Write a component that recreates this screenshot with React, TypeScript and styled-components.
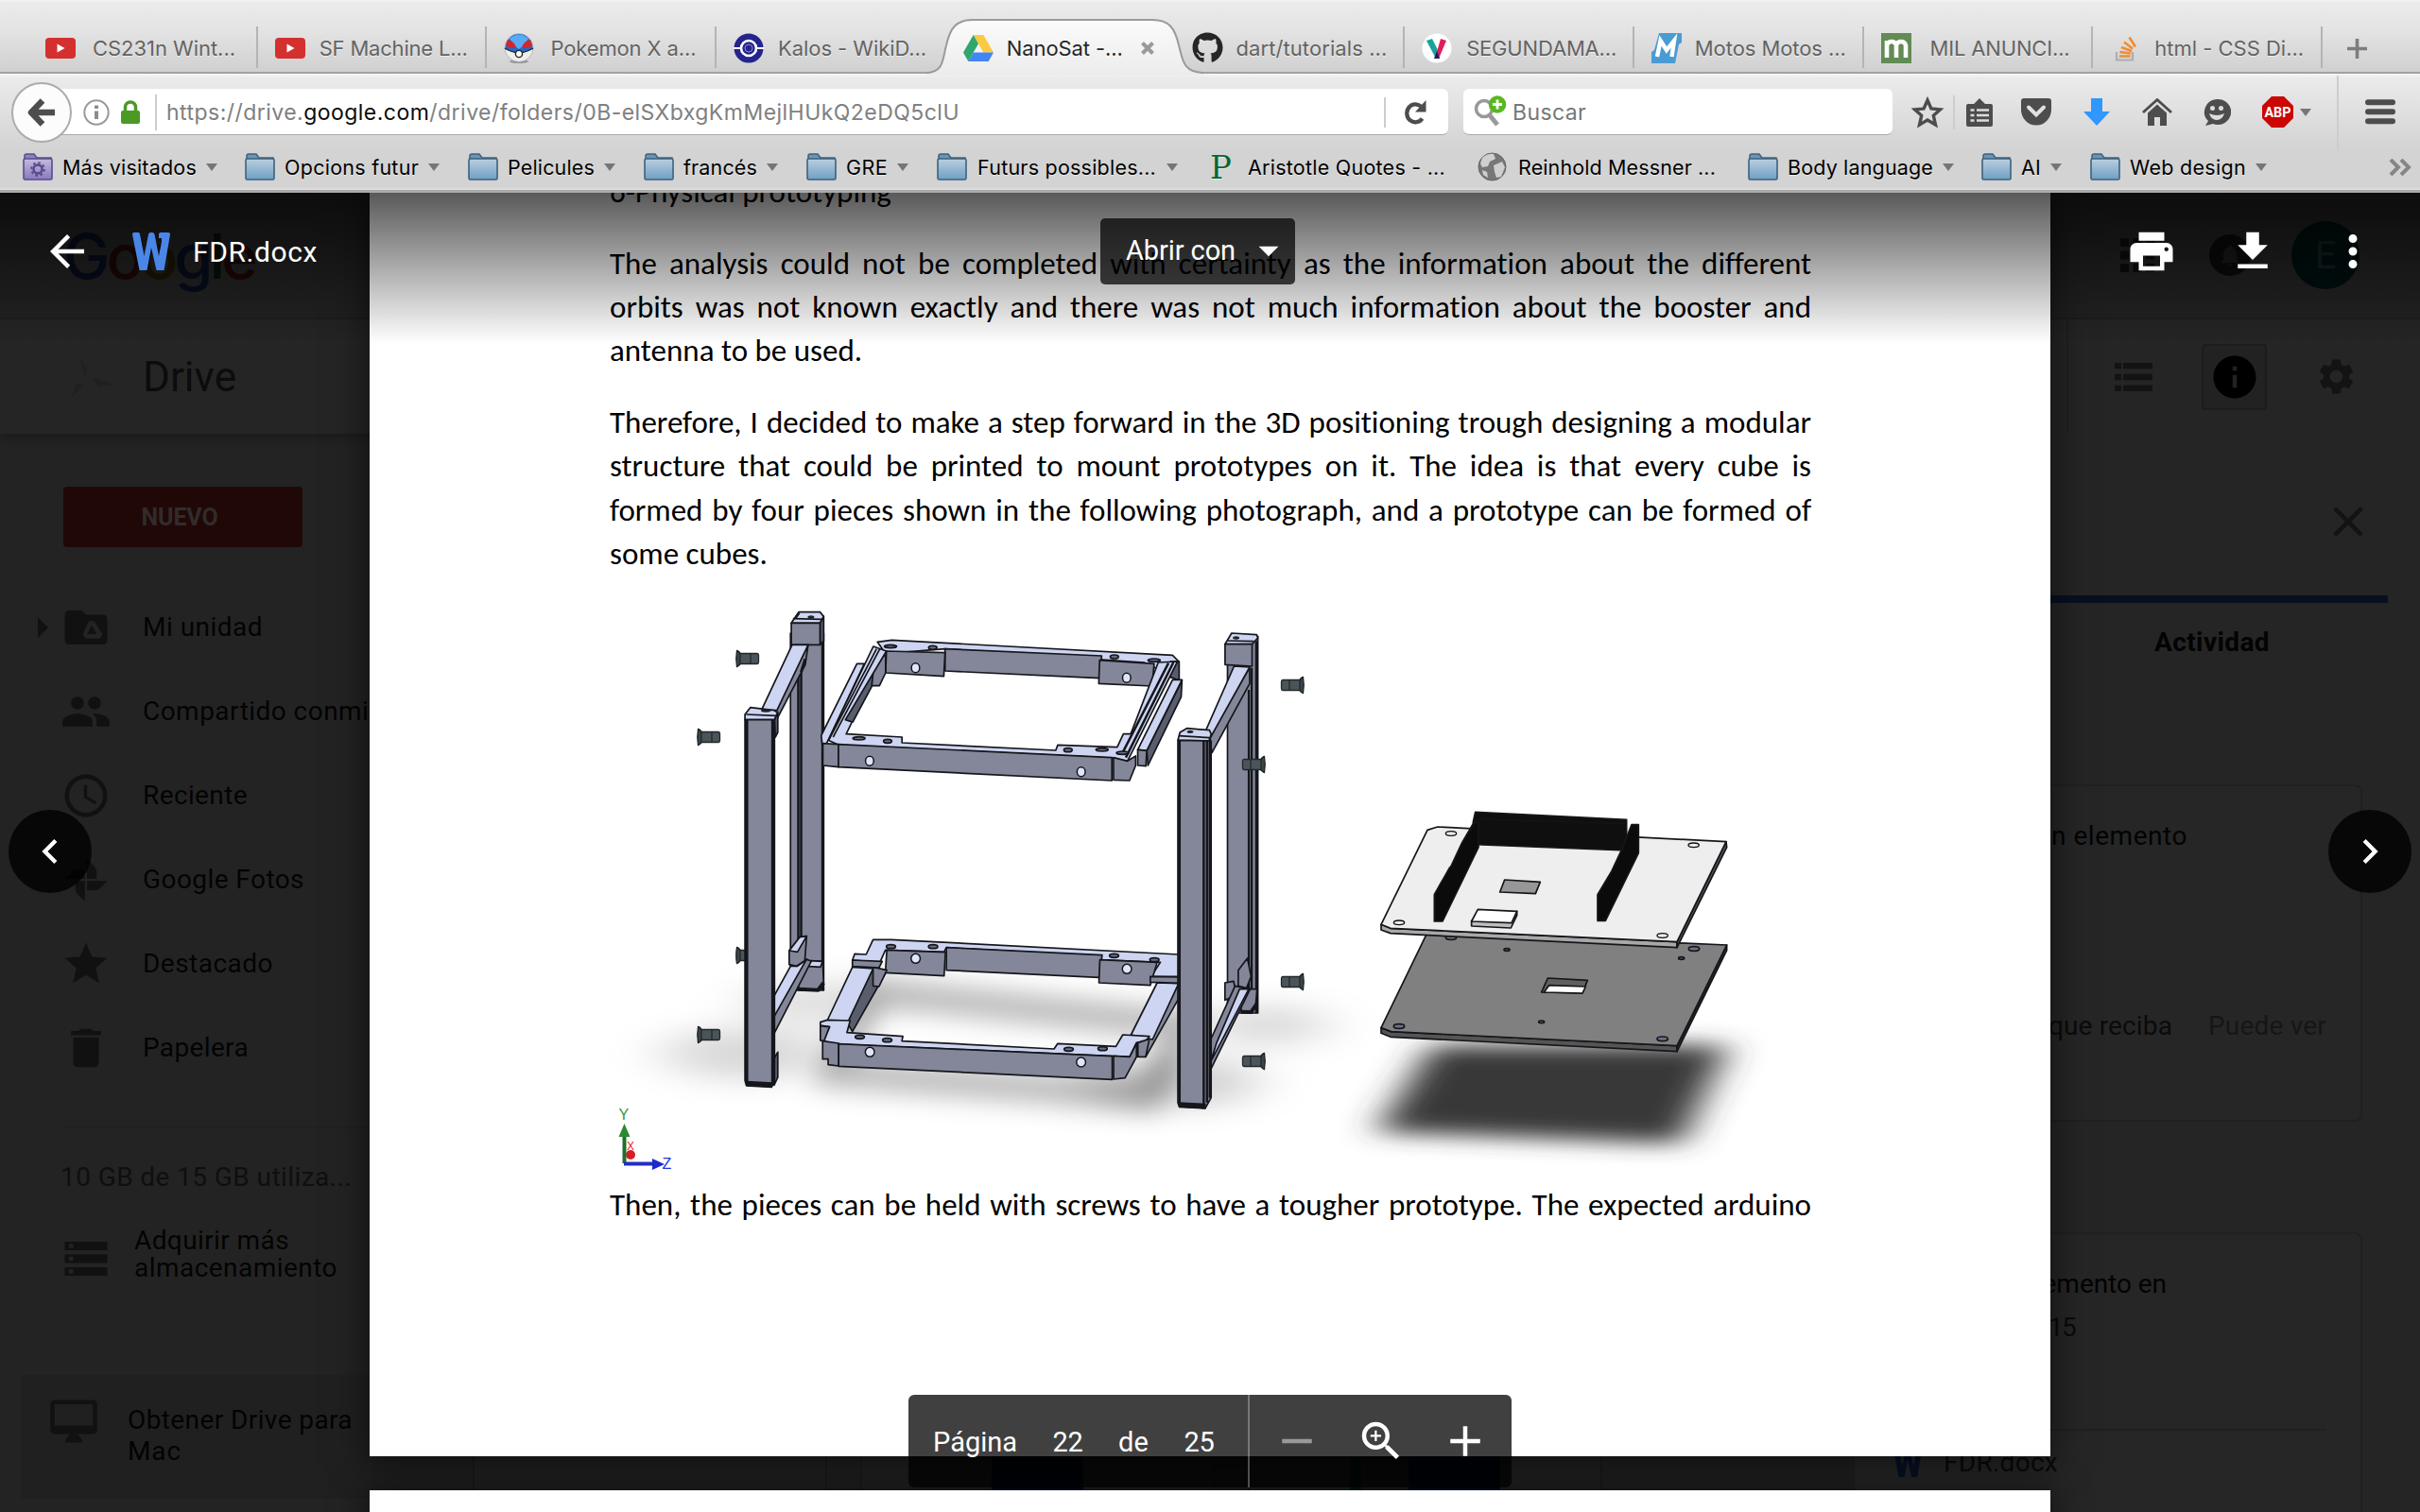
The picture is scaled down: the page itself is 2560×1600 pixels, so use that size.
import React, { useLayoutEffect, useRef, useState } from 'react';
import styled, { createGlobalStyle } from 'styled-components';
import {
  MdAccessTime, MdAdd, MdApps, MdArrowBack, MdArrowDropDown, MdChevronLeft, MdChevronRight,
  MdClose, MdDelete, MdFileDownload, MdInfo, MdMoreVert, MdNotifications,
  MdPeople, MdPrint, MdRemove, MdSettings, MdStar, MdStorage, MdZoomIn,
} from 'react-icons/md';
import { FaGithub } from 'react-icons/fa';

const Global = createGlobalStyle`
  * { box-sizing: border-box; }
  html, body { margin: 0; padding: 0; background: #232323; }
  body { width: 2560px; height: 1600px; overflow: hidden; }
  svg { display: block; flex: none; }
  p, h2 { margin: 0; font-weight: 400; }
`;

const ui = `Inter, Roboto, sans-serif`;
const roboto = `Roboto, "Liberation Sans", sans-serif`;

/* ---------- text tracked out to a given width ---------- */

const Tracked = styled.span`
  display: inline-block;
  flex: none;
  white-space: pre;
`;

function Fit({ w, children }: { w: number; children: React.ReactNode }) {
  const ref = useRef<HTMLSpanElement>(null);
  const [spacing, setSpacing] = useState(0);
  useLayoutEffect(() => {
    const el = ref.current;
    if (!el) return;
    const length = (el.textContent || '').length || 1;
    setSpacing((w - el.getBoundingClientRect().width) / length);
  }, [w]);
  return <Tracked ref={ref} style={{ letterSpacing: spacing }}>{children}</Tracked>;
}

/* ---------- browser chrome ---------- */

const Screen = styled.div`
  width: 2560px;
  height: 1600px;
  display: flex;
  flex-direction: column;
  overflow: hidden;
`;

const TabStrip = styled.div`
  height: 78px;
  flex: none;
  display: flex;
  padding-left: 30px;
  background: linear-gradient(#f4f4f4 0, #ebebeb 3px, #e4e4e4 40%, #d0d0d0 100%);
  border-bottom: 2px solid #a2a2a2;
  font-family: ${ui};
  font-size: 22px;
  color: #636363;
  text-shadow: 0 1px 0 rgba(255, 255, 255, 0.6);
`;

const TabItem = styled.div<{ $active?: boolean; $divider: boolean; $gap: number }>`
  position: relative;
  width: 242.7px;
  flex: none;
  height: 78px;
  display: flex;
  align-items: center;
  padding: 23px 0 0 18px;
  gap: ${(p) => p.$gap}px;
  color: ${(p) => (p.$active ? '#262626' : 'inherit')};
  background: ${(p) =>
    p.$divider ? 'linear-gradient(#b4b4b4, #b4b4b4) right 28px / 2px 44px no-repeat' : 'none'};
`;

const ActiveShape = styled.svg`
  position: absolute;
  left: -22px;
  top: 0;
`;

const TabFace = styled.span`
  position: relative;
  display: flex;
  width: 32px;
  justify-content: center;
`;

const TabTitle = styled.span`
  position: relative;
  display: flex;
  align-items: center;
  gap: 19px;
  padding-top: 1px;
`;

const NewTab = styled.div`
  padding: 41px 0 0 26px;
`;

const NavBar = styled.div`
  height: 80px;
  flex: none;
  display: flex;
  align-items: center;
  padding: 1px 0 0 12px;
  background: linear-gradient(#f6f6f6 0, #ebebeb 4px, #d3d3d3 100%);
`;

const BackButton = styled.div`
  width: 64px;
  height: 64px;
  border-radius: 50%;
  background: #fcfcfc;
  border: 2px solid #acacac;
  display: flex;
  align-items: center;
  justify-content: center;
  flex: none;
  z-index: 1;
`;

const Field = styled.div<{ $w: number; $pad: number }>`
  width: ${(p) => p.$w}px;
  height: 49px;
  flex: none;
  display: flex;
  align-items: center;
  padding-left: ${(p) => p.$pad}px;
  padding-top: 1px;
  background: #fff;
  border-radius: 6px;
  border-bottom: 1px solid #a8a8a8;
  font-family: ${ui};
  font-size: 23px;
  color: #808080;
`;

const UrlField = styled(Field)`
  margin-left: -30px;
  border-radius: 0 6px 6px 0;
`;

const SearchField = styled(Field)`
  margin-left: 16px;
  color: #777;
`;

const Host = styled.span`
  color: #0c0c0c;
`;

const Rule = styled.div<{ $h: number; $l: number; $r: number }>`
  width: 2px;
  height: ${(p) => p.$h}px;
  flex: none;
  margin: 0 ${(p) => p.$r}px 0 ${(p) => p.$l}px;
  background: #cdcdcd;
`;

const Slot = styled.div<{ $l: number }>`
  margin-left: ${(p) => p.$l}px;
  flex: none;
  display: flex;
  align-items: center;
`;

const Bookmarks = styled.div`
  height: 46px;
  flex: none;
  display: flex;
  padding: 0 0 6px 24px;
  background: #d3d3d3;
  border-bottom: 3px solid #a9a9a9;
  box-shadow: inset 0 -2px 0 #dcdcdc;
  font-family: ${ui};
  font-size: 21.5px;
  color: #000;
`;

const Bookmark = styled.div<{ $w: number; $gap: number }>`
  width: ${(p) => p.$w}px;
  flex: none;
  display: flex;
  align-items: center;
  gap: ${(p) => p.$gap}px;
  text-shadow: 0 1px 0 rgba(255, 255, 255, 0.5);
`;

const Caret = styled.span`
  border: 6.5px solid transparent;
  border-top: 8px solid #767676;
  border-bottom: 0;
`;

const YouTube = () => (
  <svg width="32" height="22" viewBox="0 0 32 22">
    <rect width="32" height="22" rx="4" fill="#d3302f" />
    <path d="M12.5 6.5v9l8-4.5z" fill="#fff" />
  </svg>
);

const PokeBall = () => (
  <svg width="32" height="32" viewBox="0 0 32 32">
    <ellipse cx="16" cy="30" rx="10" ry="2" fill="#999" />
    <circle cx="16" cy="15.5" r="15" fill="#eee" stroke="#999" strokeWidth=".6" />
    <path d="M1.500 16a14.500 15 0 0 1 29 0q-6 4-14.500 5Q7.500 20 1.500 16z" fill="#2468c8" />
    <path d="M6 6q10-9 20 0l-6 8-4 3-4-3z" fill="#59aaf5" />
    <path d="M4 7q8 2 9 9-8 0-11-3zM28 7q-8 2-9 9 8 0 11-3z" fill="#d3262c" />
    <path d="M1 16q6 4 15 5 9-1 15-5" fill="none" stroke="#222" strokeWidth="1.500" />
    <circle cx="16" cy="22" r="3.600" fill="#fff" stroke="#222" strokeWidth="1.400" />
  </svg>
);

const WikiDex = () => (
  <svg width="32" height="32" viewBox="0 0 32 32">
    <circle cx="16" cy="16" r="15.500" fill="#25248c" />
    <path d="M0 16h32" stroke="#fff" strokeWidth="2" />
    <circle cx="16" cy="16" r="8" fill="#25248c" stroke="#fff" strokeWidth="2.600" />
    <circle cx="16" cy="16" r="4" fill="#25248c" stroke="#8c8cd0" strokeWidth="1" />
  </svg>
);

const DriveLogo = () => (
  <svg width="32" height="28" viewBox="0 0 32 28">
    <path d="M10.700 0h10.600L32 18.500H21.400z" fill="#fdc93e" />
    <path d="M10.700 0 0 18.500 5.300 28 16 9.300z" fill="#2fa66b" />
    <path d="M5.300 28h21.400L32 18.500H10.800z" fill="#4285f4" />
  </svg>
);

const VibboIcon = () => (
  <svg width="32" height="32" viewBox="0 0 32 32">
    <circle cx="16" cy="16" r="15.500" fill="#fff" />
    <path d="M5 8l6-2 7 14-3 7z" fill="#17a39a" />
    <path d="M20 6l6 2-8 19h-4z" fill="#de1f5b" />
    <path d="M16 19l3 8h-6z" fill="#1c1e5a" />
  </svg>
);

const MotosIcon = () => (
  <svg width="32" height="32" viewBox="0 0 32 32">
    <path d="M8 0h24v10l-3 2-4 20H0V20l3-2z" fill="#4a9bd3" />
    <path d="M6 25l3.500-17 6.500 10L24 8l-2.500 17" fill="none" stroke="#fff" strokeWidth="4.400" />
  </svg>
);

const MilIcon = () => (
  <svg width="32" height="32" viewBox="0 0 32 32">
    <rect width="32" height="32" fill="#638b54" />
    <path d="M6 26V8M6 13q1-4 5-4t5 4v13M16 13q1-4 5-4t5 4v13" fill="none" stroke="#fff" strokeWidth="4.600" />
  </svg>
);

const StackIcon = () => (
  <svg width="32" height="32" viewBox="0 0 32 32">
    <path d="M7 20v8.500h17V20" fill="none" stroke="#a9adb1" strokeWidth="2.200" />
    <path d="M10 24.500h11.500M10.500 20l11.500 1.500M12 15l11 4M15 9.500l9 7M20.500 4.500l6.500 10" stroke="#f38b31" strokeWidth="2.600" />
  </svg>
);

const Folder = ({ smart }: { smart?: boolean }) => (
  <svg width="32" height="30" viewBox="0 0 32 30">
    <defs>
      <linearGradient id={smart ? 'fs' : 'fb'} x1="0" y1="0" x2="0" y2="1">
        <stop offset="0" stopColor={smart ? '#c4badf' : '#b9cfdf'} />
        <stop offset="1" stopColor={smart ? '#8a79bd' : '#6f9fc3'} />
      </linearGradient>
    </defs>
    <path d="M2 7V3q0-2 2-2h8l3 4h15v5H2z" fill={smart ? '#8e80bf' : '#6c95b5'} stroke={smart ? '#5b4b8c' : '#3d617e'} strokeWidth="1.500" />
    <rect x="1" y="6" width="30" height="22" rx="1.500" fill={`url(#${smart ? 'fs' : 'fb'})`} stroke={smart ? '#5b4b8c' : '#3d617e'} strokeWidth="1.600" />
    {smart && <circle cx="16" cy="17" r="4.500" fill="none" stroke="#57488a" strokeWidth="2.500" />}
    {smart && <circle cx="16" cy="17" r="6.800" fill="none" stroke="#57488a" strokeWidth="2" strokeDasharray="2.600 2.740" />}
  </svg>
);

const LetterP = styled.span`
  width: 28px;
  font: 400 34px/36px "DejaVu Serif", "Liberation Serif", serif;
  letter-spacing: -1px;
  color: #05682f;
`;

const Globe = () => (
  <svg width="31" height="31" viewBox="0 0 31 31">
    <circle cx="15.500" cy="15.500" r="14.500" fill="#777" stroke="#666" />
    <path d="M5 6q6-5 12-4l2 5-6 3-2 5-6 1-2-4zM17 14l9-4 3 6-4 10-5 1-2-6zM5 19l5 2 1 6-5-3z" fill="#cfcfcf" />
  </svg>
);

const tabs: { icon: React.ReactNode; title: string; w: number; gap?: number; active?: boolean }[] = [
  { icon: <YouTube />, title: 'CS231n Wint...', w: 151, gap: 18 },
  { icon: <YouTube />, title: 'SF Machine L...', w: 157 },
  { icon: <PokeBall />, title: 'Pokemon X a...', w: 154, gap: 17 },
  { icon: <WikiDex />, title: 'Kalos - WikiD...', w: 157, gap: 15 },
  { icon: <DriveLogo />, title: 'NanoSat -...', w: 123, gap: 14, active: true },
  { icon: <FaGithub size={33} color="#262626" />, title: 'dart/tutorials ...', w: 160, gap: 14 },
  { icon: <VibboIcon />, title: 'SEGUNDAMA...', w: 159 },
  { icon: <MotosIcon />, title: 'Motos Motos ...', w: 160, gap: 14 },
  { icon: <MilIcon />, title: 'MIL ANUNCI...', w: 148, gap: 20 },
  { icon: <StackIcon />, title: 'html - CSS Di...', w: 158, gap: 15 },
];

const bookmarks: { title: string; w: number; text: number; gap?: number; icon?: React.ReactNode; menu?: boolean }[] = [
  { title: 'Más visitados', w: 235, text: 142, icon: <Folder smart />, menu: true },
  { title: 'Opcions futur', w: 236, text: 142, menu: true },
  { title: 'Pelicules', w: 186, text: 92, menu: true },
  { title: 'francés', w: 172, text: 78, menu: true },
  { title: 'GRE', w: 138, text: 44, menu: true },
  { title: 'Futurs possibles...', w: 289, text: 189, gap: 11, menu: true },
  { title: 'Aristotle Quotes - ...', w: 283, text: 209, gap: 12, icon: <LetterP>P</LetterP> },
  { title: 'Reinhold Messner ...', w: 286, text: 209, gap: 12, icon: <Globe /> },
  { title: 'Body language', w: 247, text: 154, menu: true },
  { title: 'AI', w: 115, text: 21, menu: true },
  { title: 'Web design', w: 316, text: 123, menu: true },
];

const ink = '#4d4d4d';

function Chrome() {
  return (
    <>
      <TabStrip>
        {tabs.map((t) => (
          <TabItem
            key={t.title}
            $active={t.active}
            $gap={t.gap ?? 15}
            $divider={!t.active && t.title !== 'Kalos - WikiD...'}
          >
            {t.active && (
              <ActiveShape width="294" height="80" viewBox="978 0 294 80">
                <defs>
                  <linearGradient id="tab" x1="0" y1="0" x2="0" y2="1">
                    <stop offset="0" stopColor="#fbfbfb" />
                    <stop offset="1" stopColor="#ececec" />
                  </linearGradient>
                </defs>
                <path
                  d="M978 77C998 77 996 62 1000 48C1004 30 1010 21 1028 21L1218 21C1236 21 1242 30 1246 48C1250 62 1250 77 1272 77V80H978Z"
                  fill="url(#tab)"
                />
                <path
                  d="M978 77C998 77 996 62 1000 48C1004 30 1010 21 1028 21L1218 21C1236 21 1242 30 1246 48C1250 62 1250 77 1272 77"
                  fill="none" stroke="#9a9a9a" strokeWidth="2"
                />
              </ActiveShape>
            )}
            <TabFace>{t.icon}</TabFace>
            <TabTitle>
              <Fit w={t.w}>{t.title}</Fit>
              {t.active && (
                <svg width="14" height="14" viewBox="0 0 14 14">
                  <path d="M1.500 1.500l11 11M12.500 1.500l-11 11" stroke="#9a9a9a" strokeWidth="4" />
                </svg>
              )}
            </TabTitle>
          </TabItem>
        ))}
        <NewTab>
          <svg width="21" height="21" viewBox="0 0 21 21">
            <path d="M10.500 0v21M0 10.500h21" stroke="#7d7d7d" strokeWidth="3.600" />
          </svg>
        </NewTab>
      </TabStrip>

      <NavBar>
        <BackButton>
          <svg width="30" height="32" viewBox="0 0 30 32">
            <path d="M16 3.500L4 16l12 12.500M5 16h24" fill="none" stroke={ink} strokeWidth="6.500" strokeLinejoin="round" />
          </svg>
        </BackButton>
        <UrlField $w={1486} $pad={42}>
          <svg width="28" height="28" viewBox="0 0 28 28">
            <circle cx="14" cy="14" r="12.700" fill="none" stroke="#999" strokeWidth="2" />
            <path d="M14 12.500v8.500M14 6.500v3.500" stroke="#8c8c8c" strokeWidth="4" />
          </svg>
          <Slot $l={12}>
            <svg width="20" height="26" viewBox="0 0 20 26">
              <path d="M4.500 12V7.500a5.500 5.500 0 0 1 11 0V12" fill="none" stroke="#4b9a26" strokeWidth="3.500" />
              <rect y="11" width="20" height="14" rx="2" fill="#4b9a26" />
            </svg>
          </Slot>
          <Rule $h={38} $l={16} $r={10} />
          <Fit w={839}>
            https://drive.<Host>google.com</Host>/drive/folders/0B-elSXbxgKmMejlHUkQ2eDQ5clU
          </Fit>
          <Rule $h={32} $l={449} $r={20} />
          <svg width="24" height="26" viewBox="0 0 24 26">
            <path d="M18.500 19.500A9 9.500 0 1 1 17 6.500" fill="none" stroke={ink} strokeWidth="4.300" />
            <path d="M22.500 0v12.500H11z" fill={ink} />
          </svg>
        </UrlField>
        <SearchField $w={454} $pad={11}>
          <svg width="36" height="36" viewBox="0 0 36 36">
            <circle cx="11" cy="14" r="8.500" fill="none" stroke="#999" strokeWidth="3.600" />
            <path d="M16 20l9 11" stroke="#999" strokeWidth="5" />
            <circle cx="25" cy="9.500" r="9.300" fill="#58b820" />
            <path d="M25 4.500v10M20 9.500h10" stroke="#fff" strokeWidth="2.800" />
          </svg>
          <Slot $l={5}><Fit w={78}>Buscar</Fit></Slot>
        </SearchField>
        <Slot $l={20}>
          <svg width="34" height="34" viewBox="0 0 34 34">
            <path d="M17 4l3.900 9 9.600.8-7.200 6.500 2.200 9.700L17 25l-8.500 5 2.200-9.700L3.500 13.800l9.600-.8z" fill="none" stroke={ink} strokeWidth="3.400" />
          </svg>
        </Slot>
        <Rule $h={36} $l={10} $r={12} />
        <svg width="28" height="30" viewBox="0 0 28 30">
          <path d="M2 6h6l6-6 6 6h6q2 0 2 2v20q0 2-2 2H2q-2 0-2-2V8q0-2 2-2z" fill={ink} />
          <path d="M4.500 12.500h4M4.500 18h4M4.500 23.500h4M11 12.500h13M11 18h13M11 23.500h13" stroke="#ddd" strokeWidth="2.600" />
        </svg>
        <Slot $l={30}>
          <svg width="32" height="29" viewBox="0 0 32 29">
            <path d="M3 0h26q3 0 3 3v9a16 16.500 0 0 1-32 0V3q0-3 3-3z" fill={ink} />
            <path d="M8 9.500l8 8 8-8" fill="none" stroke="#e0e0e0" strokeWidth="4" strokeLinecap="round" />
          </svg>
        </Slot>
        <Slot $l={34}>
          <svg width="28" height="29" viewBox="0 0 28 29">
            <path d="M8 0h12v14h8L14 29 0 14h8z" fill="#2f97fd" />
          </svg>
        </Slot>
        <Slot $l={34}>
          <svg width="32" height="29" viewBox="0 0 32 29">
            <path d="M1 15L16 1.500 31 15" fill="none" stroke={ink} strokeWidth="2.800" />
            <path d="M6 15.500L16 6.500l10 9V29h-7v-9h-6v9H6z" fill={ink} />
          </svg>
        </Slot>
        <Slot $l={32}>
          <svg width="30" height="30" viewBox="0 0 30 30">
            <path d="M15 1a14 13.500 0 1 1-4 26l-8 2 3-5A14 13.500 0 0 1 15 1z" fill={ink} />
            <circle cx="10.500" cy="10.500" r="2.500" fill="#ddd" />
            <circle cx="19.500" cy="10.500" r="2.500" fill="#ddd" />
            <path d="M7 16q8 4 16 0-2 7-8 7t-8-7z" fill="#ddd" />
          </svg>
        </Slot>
        <Slot $l={33}>
          <svg width="33" height="33" viewBox="0 0 33 33">
            <path d="M10 0h13l10 10v13L23 33H10L0 23V10z" fill="#cc0602" />
            <text x="16.500" y="22" textAnchor="middle" textLength="28" lengthAdjust="spacingAndGlyphs" fontFamily="Roboto, sans-serif" fontWeight="700" fontSize="15" fill="#fff">ABP</text>
          </svg>
        </Slot>
        <Slot $l={7}><Caret /></Slot>
        <Rule $h={78} $l={27} $r={28} />
        <svg width="32" height="27" viewBox="0 0 32 27">
          <path d="M3 3.300h26M3 13.300h26M3 23.300h26" stroke={ink} strokeWidth="6" strokeLinecap="round" />
        </svg>
      </NavBar>

      <Bookmarks>
        {bookmarks.map((b) => (
          <Bookmark key={b.title} $w={b.w} $gap={b.gap ?? 10}>
            {b.icon ?? <Folder />}
            <Fit w={b.text}>{b.title}</Fit>
            {b.menu && <Caret />}
          </Bookmark>
        ))}
        <Bookmark $w={26} $gap={0}>
          <svg width="25" height="18" viewBox="0 0 25 18">
            <path d="M2 1l8 8-8 8M13 1l8 8-8 8" fill="none" stroke="#858585" strokeWidth="4" />
          </svg>
        </Bookmark>
      </Bookmarks>
    </>
  );
}

/* ---------- dimmed Drive page behind the viewer ---------- */

const Stage = styled.div`
  position: relative;
  flex: 1;
  overflow: hidden;
  background: #232323;
`;

const DriveLayer = styled.div`
  height: 1396px;
  display: flex;
  flex-direction: column;
  font-family: ${roboto};
  font-size: 28px;
  color: #030303;
`;

const Masthead = styled.div`
  height: 134px;
  flex: none;
  display: flex;
  align-items: center;
  justify-content: space-between;
  padding: 0 64px 0 67px;
  border-bottom: 2px solid #202020;
`;

const Wordmark = styled.div`
  font: 500 66px/90px ${ui};
  padding-top: 2px;
`;

const Tint = styled.span<{ $c: string }>`
  color: ${(p) => p.$c};
`;

const Account = styled.div`
  display: flex;
  align-items: center;
  color: #0c0c0c;
`;

const Disc = styled.div<{ $d: number; $bg: string; $l: number }>`
  width: ${(p) => p.$d}px;
  height: ${(p) => p.$d}px;
  margin-left: ${(p) => p.$l}px;
  border-radius: 50%;
  background: ${(p) => p.$bg};
  display: flex;
  align-items: center;
  justify-content: center;
  font-size: 40px;
  color: #10201f;
`;

const SubHeader = styled.div`
  height: 121px;
  flex: none;
  display: flex;
  align-items: center;
  padding: 0 66px 0 76px;
  background: #252525;
  box-shadow: 0 4px 10px rgba(0, 0, 0, 0.25);
`;

const DriveTitle = styled.div`
  flex: 1;
  margin-left: 29px;
  font-size: 44px;
  color: #0c0c0c;
`;

const ToolIcons = styled.div`
  display: flex;
  align-items: center;
  height: 100%;
  width: 308px;
  padding-left: 49px;
  border-left: 2px solid #202020;
  color: #131313;
`;

const InfoToggle = styled.div`
  width: 72px;
  height: 70px;
  margin: 0 51px 0 52px;
  border: 2px solid #1c1c1c;
  border-radius: 4px;
  background: #222;
  display: flex;
  align-items: center;
  justify-content: center;
  color: #000;
`;

const DriveBody = styled.div`
  flex: 1;
  display: flex;
  min-height: 0;
`;

const Sidebar = styled.div`
  width: 427px;
  flex: none;
  padding-top: 56px;
  display: flex;
  flex-direction: column;
`;

const NewButton = styled.div`
  width: 253px;
  height: 64px;
  margin-left: 67px;
  padding-right: 7px;
  border-radius: 4px;
  background: #200807;
  color: #322b2b;
  font-weight: 700;
  font-size: 25px;
  display: flex;
  align-items: center;
  justify-content: center;
  flex: none;
`;

const NavList = styled.div`
  margin-top: 40px;
`;

const NavRow = styled.div`
  height: 89px;
  display: flex;
  align-items: center;
`;

const NavIcon = styled.div`
  width: 87px;
  color: #111;
`;

const Expander = styled.div`
  width: 64px;
  display: flex;
  padding-left: 40px;
  flex: none;
`;

const Quota = styled.div`
  margin: 39px 0 0 64px;
  padding-top: 35px;
  border-top: 2px solid #202020;
  line-height: 34px;
  color: #0f0f0f;
`;

const Storage = styled.div`
  display: flex;
  align-items: flex-start;
  gap: 24px;
  margin: 35px 0 0 64px;
  line-height: 29.300px;
`;

const StorageIcon = styled.div`
  padding-top: 7px;
  color: #111;
`;

const Promo = styled.div`
  margin: 96px 0 0 22px;
  width: 405px;
  height: 131px;
  display: flex;
  align-items: flex-start;
  gap: 30px;
  padding: 22px 0 0 29px;
  border-radius: 4px;
  background: #202020;
  line-height: 33px;
`;

const Lines = styled.div<{ $pt?: number }>`
  display: flex;
  flex-direction: column;
  align-items: flex-start;
  padding-top: ${(p) => p.$pt ?? 0}px;
`;

const FileGrid = styled.div`
  flex: 1;
  display: flex;
  align-items: flex-end;
  gap: 35px;
  padding-left: 73px;
  background: #202020;
`;

const FileCard = styled.div`
  width: 375px;
  height: 300px;
  display: flex;
  justify-content: center;
  border: 2px solid #1b1b1b;
  background: #212121;
`;

const Thumb = styled.div<{ $w: number; $bg: string }>`
  width: ${(p) => p.$w}px;
  height: 100%;
  background: ${(p) => p.$bg};
`;

const Details = styled.div`
  width: 600px;
  flex: none;
  display: flex;
  flex-direction: column;
  background: #252525;
`;

const CloseRow = styled.div`
  height: 171px;
  display: flex;
  justify-content: flex-end;
  padding: 66px 49px 0 0;
  color: #131313;
  flex: none;
`;

const DetailTab = styled.div`
  align-self: flex-end;
  width: 372px;
  height: 200px;
  flex: none;
  margin-right: 34px;
  border-top: 8px solid #081020;
  padding-top: 24px;
  display: flex;
  justify-content: center;
  font-weight: 700;
  line-height: 36px;
`;

const ActivityCard = styled.div<{ $h: number; $mb: number }>`
  height: ${(p) => p.$h}px;
  margin: 0 61px ${(p) => p.$mb}px 0;
  flex: none;
  border: 2px solid #202020;
  border-radius: 8px;
  background: #262626;
  padding: 33px 36px 0 0;
  display: flex;
  flex-direction: column;
`;

const CardLine = styled.div<{ $pr: number; $mt?: number; $c?: string }>`
  display: flex;
  justify-content: flex-end;
  gap: 38px;
  line-height: 40px;
  margin-top: ${(p) => p.$mt ?? 0}px;
  padding-right: ${(p) => p.$pr}px;
  color: ${(p) => p.$c ?? '#030303'};
`;

const CardRule = styled.div`
  height: 2px;
  margin-top: 87px;
  background: #202020;
`;

const AttachedFile = styled.div`
  display: flex;
  align-items: center;
  gap: 23px;
  margin: 17px 0 0 41px;
  color: #0a0a0a;
`;

const DocW = ({ size, color }: { size: number; color: string }) => (
  <svg width={size} height={size} viewBox="0 0 40 40">
    <path
      d="M0 2q0-2 2-2h4q2 0 2 2l4.500 23L17 2q.5-2 2.500-2h1.500q2 0 2.500 2L28 25l3-15V6h-3V2q0-2 2-2h8q2 0 2 2l-6.500 38h-8L20 16l-4.500 24h-8z"
      fill={color}
    />
  </svg>
);

const FolderDrive = () => (
  <svg width="54" height="54" viewBox="0 0 24 24">
    <path d="M10 4H4c-1.100 0-2 .9-2 2v12c0 1.100.9 2 2 2h16c1.100 0 2-.9 2-2V8c0-1.100-.9-2-2-2h-8z" fill="#111" />
    <path d="M13.300 9h2.500l4 6.200-1.300 2H11.800l-1.300-2zM14.600 11l-2 4h4.400z" fill="#232323" fillRule="evenodd" />
  </svg>
);

const Pinwheel = () => (
  <svg width="54" height="54" viewBox="0 0 24 24">
    <path d="M11.500 11.500H2q4-4.500 6-4.500l3.500.2zM12 2q5 4 5 6v3.500h-4.500zM12.500 12.500H22q-4 4.500-6 4.500l-3.500-.2zM11.500 22q-5-4-4.500-6v-3.500h4.500z" fill="#111" />
  </svg>
);

const Monitor = () => (
  <svg width="54" height="54" viewBox="0 0 24 24">
    <path d="M21 2H3c-1.100 0-2 .9-2 2v12c0 1.100.9 2 2 2h7l-2 3v1h8v-1l-2-3h7c1.100 0 2-.9 2-2V4c0-1.100-.9-2-2-2zm0 12H3V4h18v10z" fill="#111" />
  </svg>
);

const navItems: { icon: React.ReactNode; label: string; w: number; open?: boolean }[] = [
  { icon: <FolderDrive />, label: 'Mi unidad', w: 127, open: true },
  { icon: <MdPeople size={54} />, label: 'Compartido conmigo', w: 272 },
  { icon: <MdAccessTime size={54} />, label: 'Reciente', w: 111 },
  { icon: <Pinwheel />, label: 'Google Fotos', w: 171 },
  { icon: <MdStar size={54} />, label: 'Destacado', w: 138 },
  { icon: <MdDelete size={54} />, label: 'Papelera', w: 112 },
];

function DrivePage() {
  return (
    <DriveLayer>
      <Masthead>
        <Wordmark>
          <Fit w={202}>
            <Tint $c="#050c1c">G</Tint><Tint $c="#1c0605">o</Tint><Tint $c="#1c1502">o</Tint>
            <Tint $c="#050c1c">g</Tint><Tint $c="#031007">l</Tint><Tint $c="#1c0605">e</Tint>
          </Fit>
        </Wordmark>
        <Account>
          <MdApps size={54} />
          <Disc $d={44} $bg="#0a0a0a" $l={49}><MdNotifications size={28} color="#191919" /></Disc>
          <Disc $d={72} $bg="#000e0e" $l={43}>E</Disc>
        </Account>
      </Masthead>
      <SubHeader>
        <svg width="46" height="44" viewBox="0 0 46 44">
          <path d="M8 0l8 14-2 8zM22 22l24 8-18 2zM14 28l-14 16 4-14z" fill="#202020" />
        </svg>
        <DriveTitle><Fit w={99}>Drive</Fit></DriveTitle>
        <ToolIcons>
          <svg width="40" height="30" viewBox="0 0 40 30">
            <path d="M0 3h7M9 3h31M0 15h7M9 15h31M0 27h7M9 27h31" stroke="#131313" strokeWidth="6.400" />
          </svg>
          <InfoToggle><MdInfo size={54} /></InfoToggle>
          <MdSettings size={45} />
        </ToolIcons>
      </SubHeader>
      <DriveBody>
        <Sidebar>
          <NewButton><Fit w={81}>NUEVO</Fit></NewButton>
          <NavList>
            {navItems.map((n) => (
              <NavRow key={n.label}>
                <Expander>
                  {n.open && (
                    <svg width="11" height="22" viewBox="0 0 11 22"><path d="M0 0l11 11L0 22z" fill="#111" /></svg>
                  )}
                </Expander>
                <NavIcon>{n.icon}</NavIcon>
                <Fit w={n.w}>{n.label}</Fit>
              </NavRow>
            ))}
          </NavList>
          <Quota><Fit w={308}>10 GB de 15 GB utiliza...</Fit></Quota>
          <Storage>
            <StorageIcon><MdStorage size={54} /></StorageIcon>
            <Lines>
              <Fit w={164}>Adquirir más</Fit>
              <Fit w={215}>almacenamiento</Fit>
            </Lines>
          </Storage>
          <Promo>
            <Monitor />
            <Lines $pt={9}>
              <Fit w={238}>Obtener Drive para</Fit>
              <Fit w={57}>Mac</Fit>
            </Lines>
          </Promo>
        </Sidebar>
        <FileGrid>
          <FileCard />
          <FileCard><Thumb $w={97} $bg="#020716" /></FileCard>
          <FileCard>
            <Thumb $w={12} $bg="#03170d" /><Thumb $w={50} $bg="#1c1c1c" /><Thumb $w={97} $bg="#02081a" />
          </FileCard>
        </FileGrid>
        <Details>
          <CloseRow><MdClose size={54} /></CloseRow>
          <DetailTab><Fit w={122}>Actividad</Fit></DetailTab>
          <ActivityCard $h={357} $mb={117}>
            <CardLine $pr={147}><Fit w={160}>un elemento</Fit></CardLine>
            <CardLine $pr={0} $mt={161} $c="#0b0b0b">
              <Fit w={131}>que reciba</Fit>
              <Tint $c="#161616"><Fit w={125}>Puede ver</Fit></Tint>
            </CardLine>
          </ActivityCard>
          <ActivityCard $h={330} $mb={0}>
            <CardLine $pr={169}><Fit w={153}>elemento en</Fit></CardLine>
            <CardLine $pr={266} $mt={6} $c="#0a0a0a"><Fit w={28}>15</Fit></CardLine>
            <CardRule />
            <AttachedFile>
              <DocW size={30} color="#071024" />
              <Fit w={121}>FDR.docx</Fit>
            </AttachedFile>
          </ActivityCard>
        </Details>
      </DriveBody>
    </DriveLayer>
  );
}

/* ---------- document viewer ---------- */

const Viewer = styled.div`
  position: absolute;
  inset: 0;
  padding-left: 391px;
`;

const Sheet = styled.div<{ $h: number }>`
  width: 1778px;
  height: ${(p) => p.$h}px;
  margin-bottom: 36px;
  padding: 0 253px 0 254px;
  background: #fff;
  overflow: hidden;
  font-family: Carlito, Lato, "Open Sans", sans-serif;
  font-size: 33px;
  font-variant-ligatures: none;
  line-height: 46.200px;
  color: #000;
`;

const SheetShadow = styled.div`
  width: 1778px;
  box-shadow: 0 4px 36px 4px rgba(0, 0, 0, 0.5);
`;

const Heading = styled.h2`
  font-size: 33px;
  line-height: 46px;
  margin: -24px 0 30px;
`;

const Paragraph = styled.p`
  margin-bottom: 29.500px;
`;

const Line = styled.span<{ $last?: boolean }>`
  display: block;
  white-space: nowrap;
  text-align: justify;
  text-align-last: ${(p) => (p.$last ? 'left' : 'justify')};
`;

const Figure = styled.div`
  margin: -18px -20px 0 0;
`;

const FACE = '#84879a';
const TOP = '#cdd5f2';
const DARK = '#5a5d6c';

const Facet = ({ p, f = FACE }: { p: string; f?: string }) => (
  <polygon points={p} fill={f} stroke="#15161b" strokeWidth="1.700" strokeLinejoin="round" vectorEffect="non-scaling-stroke" />
);

const Edge = ({ d, w = 1.7 }: { d: string; w?: number }) => (
  <path d={d} fill="none" stroke="#15161b" strokeWidth={w} vectorEffect="non-scaling-stroke" />
);

const Bores = ({ at }: { at: [number, number][] }) => (
  <>
    {at.map(([x, y]) => (
      <ellipse key={`${x}-${y}`} cx={x} cy={y} rx="10" ry="15" fill="#dfe5fa" stroke="#15161b" strokeWidth="1.500" vectorEffect="non-scaling-stroke" />
    ))}
  </>
);

const Sinks = ({ at, rx = 10, ry = 6 }: { at: [number, number][]; rx?: number; ry?: number }) => (
  <>
    {at.map(([x, y]) => (
      <ellipse key={`${x}-${y}`} cx={x} cy={y} rx={rx} ry={ry} fill="#6c7084" stroke="#15161b" strokeWidth="1.700" vectorEffect="non-scaling-stroke" />
    ))}
  </>
);

const Screw = ({ x, y, flip }: { x: number; y: number; flip?: boolean }) => (
  <g transform={`translate(${x} ${y}) scale(${flip ? -1 : 1} 1)`}>
    <path d="M-11.500-8.500q2.500.5 4.500 4.500v8q-2 4-4.500 4.500-1.500-8.500 0-17z" fill="#3c4448" stroke="#1d2224" strokeWidth="1.300" />
    <path d="M-8-5.500H10q1.500 0 1.500 2v7q0 2-1.500 2H-8z" fill="#4b5559" stroke="#22282a" strokeWidth="1.300" />
    <path d="M3-5V5" stroke="#22282a" strokeWidth="1.300" />
  </g>
);

function Assembly() {
  return (
    <Figure>
      <svg width="1290" height="632" viewBox="645 620 1290 632">
        <defs>
          <filter id="soft" x="-30%" y="-50%" width="160%" height="200%"><feGaussianBlur stdDeviation="14" /></filter>
          <filter id="wide" x="-30%" y="-50%" width="160%" height="200%"><feGaussianBlur stdDeviation="30 14" /></filter>
          <filter id="board" x="-30%" y="-50%" width="160%" height="200%"><feGaussianBlur stdDeviation="20 11" /></filter>
        </defs>

        {/* ground shadows */}
        <g filter="url(#soft)">
          <path d="M925 1050L1255 1085L1215 1160L880 1135Z" fill="none" stroke="#000" strokeOpacity=".3" strokeWidth="28" />
        </g>
        <g filter="url(#wide)">
          <ellipse cx="790" cy="1115" rx="90" ry="28" fill="#000" fillOpacity=".15" />
          <ellipse cx="1240" cy="1145" rx="90" ry="28" fill="#000" fillOpacity=".18" />
          <ellipse cx="1340" cy="1085" rx="65" ry="22" fill="#000" fillOpacity=".14" />
          <ellipse cx="860" cy="1060" rx="70" ry="24" fill="#000" fillOpacity=".12" />
        </g>
        <polygon points="1515,1106 1828,1106 1778,1210 1456,1198" fill="#383838" filter="url(#board)" />

        {/* rear posts, upper braces and upper frame */}
        <g transform="translate(720 620) scale(.43367 .33333)">
          <Facet p="268,150 349,150 349,1284 268,1284" />
          <Edge d="M287 270V1284M294 250V1284M346 180V1284" w={2.5} />
          <Facet p="270,118 288,83 340,83 349,97 340,118" f={TOP} />
          <Facet p="340,118 349,97 349,175 340,187" f={DARK} />
          <Facet p="270,118 340,118 340,187 270,187" />
          <Edge d="M274 104L345 106M290 86L280 104" />
          <ellipse cx="318" cy="99" rx="8" ry="5" fill="#222" />
          <Facet p="311,187 304,250 232,430 230,395" />
          <Facet p="272,187 311,187 235,395 197,395" f={TOP} />
          <path d="M304 232l-10 42" stroke="#15161b" strokeWidth="7" />

          <Facet p="1334,240 1408,160 1408,1356 1334,1356" />
          <Edge d="M1386 330V1356M1393 260V1356M1404 175V1356" w={2.3} />
          <Facet p="1328,185 1344,150 1405,155 1408,165 1394,185" f={TOP} />
          <Facet p="1328,185 1394,185 1394,255 1328,250" />
          <Edge d="M1334 174L1398 176" />
          <ellipse cx="1355" cy="165" rx="8" ry="5" fill="#222" />
          <Facet p="1388,258 1388,310 1296,530 1290,480" />
          <Facet p="1350,255 1388,258 1293,480 1280,462" f={TOP} />

          <Facet p="480,178 515,172 1200,220 1215,240 1160,262 1130,243 645,200 500,215" f={TOP} />
          <Facet p="645,200 1027,222 1022,293 645,270" />
          <Facet p="502,207 645,212 642,287 500,276" />
          <Facet p="1022,236 1155,247 1150,318 1020,310" />
          <Facet p="1195,240 1216,240 1216,300 1195,290" f={DARK} />
          <Facet p="470,235 500,220 500,276 485,317 462,317" />
          <Facet p="472,248 466,320 420,432 400,428" f={DARK} />
          <Facet p="430,247 448,247 362,485 347,520 343,475" f={TOP} />
          <Facet p="470,192 502,207 402,425 418,432 404,470 540,480 540,498 915,522 920,505 1065,512 1080,470 1098,470 1165,243 1212,240 1090,556 1050,546 385,505 360,490" f={TOP} />
          <Edge d="M486 200L372 480M478 200L362 488" />
          <Edge d="M1190 245L1078 530M1202 243L1086 545" w={2.5} />
          <Facet p="347,500 385,503 385,575 347,570" />
          <Facet p="385,503 1052,545 1052,618 385,575" />
          <Facet p="1056,545 1090,556 1110,540 1110,570 1095,618 1056,616" />
          <Facet p="1137,523 1223,300 1221,352 1140,570" f={DARK} />
          <Facet p="1200,298 1223,298 1137,523 1115,520" f={TOP} />
          <Facet p="1115,520 1137,523 1135,572 1115,570" />
          <Bores at={[[573, 260], [1088, 292], [461, 556], [977, 590]]} />
          <Sinks at={[[615, 196], [1058, 225], [505, 493], [945, 521]]} />
          <Sinks at={[[512, 192], [1155, 236], [435, 484], [1028, 520], [1078, 530]]} rx={15} ry={5} />
        </g>

        {/* lower frame, lower braces and feet */}
        <g transform="translate(640 900) scale(.48472 .33333)">
          <Facet p="425,385 450,350 475,352 477,420 465,443 422,440" />
          <Facet p="445,350 475,352 470,370 445,368" f={TOP} />
          <Edge d="M422 440L465 443L477 420" w={4} />
          <Facet p="366,500 440,345 450,352 366,590" />
          <Facet p="366,470 405,367 420,367 440,345 366,535" f={TOP} />
          <Facet p="402,318 425,275 440,272 436,350 418,367 402,362" />
          <Facet p="402,318 425,275 440,272 420,322" f={TOP} />

          <Facet p="1353,420 1372,415 1378,460 1353,475" />
          <Facet p="1390,440 1423,440 1420,490 1410,512 1388,510" />
          <Edge d="M1388 512L1410 513L1422 488" w={4} />
          <Facet p="1322,600 1375,430 1408,440 1322,695" />
          <Facet p="1335,610 1385,440 1405,440 1322,670" f={TOP} />
          <Facet p="1382,380 1402,342 1410,400 1400,437 1382,430" />

          <Facet p="585,283 625,283 1252,330 1252,400 1192,400 1212,355 1080,347 1080,335 745,308 740,322 612,316 600,355 540,348 545,328 570,330" f={TOP} />
          <Facet p="745,308 1085,332 1078,403 745,380" />
          <Facet p="615,316 743,323 740,398 612,388" />
          <Facet p="1080,347 1205,355 1190,428 1078,420" />
          <Facet p="585,375 612,390 540,575 528,545" f={DARK} />
          <Facet p="585,370 615,380 598,432 585,430" />
          <Facet p="540,348 605,352 598,372 540,368" />
          <Facet p="540,370 585,375 530,545 485,540" f={TOP} />
          <Facet p="1252,425 1252,470 1180,655 1175,600" />
          <Facet p="1205,420 1252,422 1195,600 1148,585" f={TOP} />
          <Facet p="1190,400 1252,402 1252,421 1190,418" />
          <Facet p="470,545 485,538 535,540 528,578 650,590 648,605 980,630 988,613 1115,622 1130,585 1188,590 1180,605 1160,610 1145,655 510,615 475,605 490,560 470,555" f={TOP} />
          <Facet p="470,557 490,560 478,605 470,603" />
          <Facet p="475,605 510,612 510,684 487,680 487,662 475,662" />
          <Facet p="510,614 1107,653 1107,727 510,685" />
          <Facet p="1110,652 1145,655 1160,612 1160,655 1135,722 1110,726" />
          <Facet p="1163,610 1188,598 1180,655 1163,655" />
          <Bores at={[[678, 343], [1139, 376], [578, 640], [1039, 672]]} />
          <Sinks at={[[624, 305], [716, 305], [1111, 334], [1199, 347], [556, 592], [616, 602], [1012, 631], [1086, 629]]} />
        </g>

        <Screw x={791} y={1011} />

        {/* front posts */}
        <g transform="translate(720 620) scale(.43367 .33333)">
          <Facet p="229,425 237,400 237,465 231,480" f={DARK} />
          <Facet p="157,425 157,408 170,386 228,395 236,402 229,425" f={TOP} />
          <Facet p="228,1500 237,1480 237,1560 228,1585" f={DARK} />
          <Facet p="157,425 229,425 229,1575 222,1590 160,1585 157,1570" />
          <Edge d="M161 425V1580M225 425V1580" w={3.5} />
          <Edge d="M160 408L232 412" />
          <Edge d="M160 1580L224 1585" w={6} />
          <Facet p="1213,490 1218,465 1235,452 1290,458 1294,470 1290,492" f={TOP} />
          <Facet p="1213,490 1294,492 1294,1625 1280,1658 1216,1653 1213,1640" />
          <Edge d="M1217 490V1648M1276 492V1648M1284 490V1640M1291 480V1625" w={2.5} />
          <Edge d="M1216 476L1290 482" />
          <Edge d="M1216 1648L1281 1652" w={6} />
          <ellipse cx="1243" cy="463" rx="8" ry="5" fill="#222" />
          <ellipse cx="208" cy="396" rx="12" ry="5" fill="#222" />
        </g>
        <Screw x={791} y={697} />
        <Screw x={750} y={780} />
        <Screw x={750} y={1095} />
        <Screw x={1367} y={725} flip />
        <Screw x={1326} y={809} flip />
        <Screw x={1367} y={1039} flip />
        <Screw x={1326} y={1123} flip />

        {/* boards */}
        <g transform="translate(1400 820) scale(.33333)">
          <Facet p="183,803 215,815 1122,860 1122,878 213,832 183,820" f="#555" />
          <Facet p="1122,860 1280,540 1280,557 1122,878" f="#2a2a2a" />
          <Facet p="330,500 1280,540 1122,860 215,815 183,803" f="#808080" />
          <Facet p="712,645 838,652 822,693 692,690" f="#606060" />
          <Facet p="716,668 832,672 822,693 700,690" f="#fff" />
          <Sinks at={[[240, 798], [1076, 838], [1176, 552], [405, 516]]} rx={17} ry={7} />
          <Sinks at={[[582, 555], [1136, 582], [692, 784]]} rx={9} ry={4} />
          <Facet p="183,475 213,487 1122,530 1122,548 213,503 183,492" f="#a8a8a8" />
          <Facet p="1122,530 1278,212 1280,230 1122,548" f="#555" />
          <Facet p="330,175 362,165 1278,212 1122,530 213,487 183,475" f="#eee" />
          <g fill="#eee" stroke="#111" strokeWidth="4">
            <ellipse cx="405" cy="186" rx="17" ry="7" />
            <ellipse cx="1175" cy="223" rx="17" ry="7" />
            <ellipse cx="240" cy="469" rx="17" ry="7" />
            <ellipse cx="1076" cy="510" rx="17" ry="7" />
          </g>
          <Facet p="482,118 962,142 962,240 485,221 475,150" f="#0f0f0f" />
          <Edge d="M490 140L955 155" w={1} />
          <Facet p="478,150 492,152 492,230 378,465 352,465 352,380 400,295 405,290 440,215" f="#0b0b0b" />
          <Facet p="978,158 1000,158 1000,248 895,463 870,463 870,380 915,305 950,230" f="#0b0b0b" />
          <Facet p="575,333 688,340 673,377 560,372" f="#979797" />
          <Facet p="470,463 597,468 614,433 614,446 595,486 470,480" f="#bdbdbd" />
          <Facet p="490,427 614,433 597,470 470,465" f="#fff" />
        </g>

        {/* axis triad */}
        <g fontFamily="Liberation Sans, sans-serif" fontSize="14">
          <text x="654.500" y="1185" fill="#2f9a3a" fontSize="16">Y</text>
          <text x="663" y="1217" fill="#e8202a" fontSize="12">X</text>
          <circle cx="667" cy="1222" r="5" fill="#d91c24" />
          <path d="M660.500 1231v-32" stroke="#1f6f28" strokeWidth="4" />
          <path d="M660.500 1189l6 14h-12z" fill="#2a8a34" />
          <path d="M660 1231.500h32" stroke="#2030c0" strokeWidth="4" />
          <path d="M703 1232l-13-6v12z" fill="#1c2ccc" />
          <text x="700.500" y="1237" fill="#2338e8" fontSize="16">Z</text>
        </g>
      </svg>
    </Figure>
  );
}

const TopShade = styled.div`
  position: absolute;
  inset: 0 0 auto 0;
  height: 160px;
  background: linear-gradient(rgba(0, 0, 0, 0.65), rgba(0, 0, 0, 0));
`;

const ViewerBar = styled.div`
  position: absolute;
  inset: 0 0 auto 0;
  height: 124px;
  display: grid;
  grid-template-columns: 1164px 206px 1fr;
  align-items: center;
  font-family: ${roboto};
  font-size: 30px;
  color: #fff;
`;

const BarStart = styled.div`
  display: flex;
  align-items: center;
  padding-left: 44px;
`;

const OpenWith = styled.div`
  height: 70px;
  display: flex;
  align-items: center;
  justify-content: space-between;
  padding: 0 3px 2px 27px;
  border-radius: 5px;
  background: rgba(0, 0, 0, 0.72);
  font-size: 29px;
`;

const BarEnd = styled.div`
  display: flex;
  align-items: center;
  justify-content: flex-end;
  gap: 52.500px;
  padding-right: 44px;
`;

const Pager = styled.div<{ $side: 'left' | 'right' }>`
  position: absolute;
  top: 653px;
  ${(p) => p.$side}: 9px;
  width: 88px;
  height: 88px;
  border-radius: 50%;
  background: rgba(0, 0, 0, 0.8);
  color: #fff;
  display: flex;
  align-items: center;
  justify-content: center;
`;

const PageControls = styled.div`
  position: absolute;
  left: 961px;
  top: 1272px;
  width: 638px;
  height: 98px;
  display: flex;
  align-items: center;
  border-radius: 6px;
  background: rgba(0, 0, 0, 0.75);
  font-family: ${roboto};
  font-size: 29px;
  color: #fff;
`;

const PageInfo = styled.div`
  width: 361px;
  height: 100%;
  display: flex;
  align-items: center;
  gap: 37.500px;
  padding: 1px 0 0 26px;
  border-right: 2px solid rgba(255, 255, 255, 0.3);
`;

const ZoomTools = styled.div`
  flex: 1;
  display: flex;
  align-items: center;
  gap: 35px;
  padding-left: 23px;
`;

export default function App() {
  return (
    <Screen>
      <Global />
      <Chrome />
      <Stage>
        <DrivePage />
        <Viewer>
          <SheetShadow>
            <Sheet $h={1337}>
              <Heading>6-Physical prototyping</Heading>
              <Paragraph>
                <Line>The analysis could not be completed with certainty as the information about the different</Line>
                <Line>orbits was not known exactly and there was not much information about the booster and</Line>
                <Line $last>antenna to be used.</Line>
              </Paragraph>
              <Paragraph>
                <Line>Therefore, I decided to make a step forward in the 3D positioning trough designing a modular</Line>
                <Line>structure that could be printed to mount prototypes on it. The idea is that every cube is</Line>
                <Line>formed by four pieces shown in the following photograph, and a prototype can be formed of</Line>
                <Line $last>some cubes.</Line>
              </Paragraph>
              <Assembly />
              <Paragraph>
                <Line>Then, the pieces can be held with screws to have a tougher prototype. The expected arduino</Line>
              </Paragraph>
            </Sheet>
          </SheetShadow>
          <SheetShadow><Sheet $h={60} /></SheetShadow>
        </Viewer>
        <TopShade />
        <ViewerBar>
          <BarStart>
            <MdArrowBack size={54} />
            <Slot $l={42}><DocW size={40} color="#4a86e8" /></Slot>
            <Slot $l={24}><Fit w={132}>FDR.docx</Fit></Slot>
          </BarStart>
          <OpenWith>
            <Fit w={116}>Abrir con</Fit>
            <MdArrowDropDown size={50} />
          </OpenWith>
          <BarEnd>
            <MdPrint size={54} />
            <MdFileDownload size={54} />
            <MdMoreVert size={54} />
          </BarEnd>
        </ViewerBar>
        <Pager $side="left"><MdChevronLeft size={52} /></Pager>
        <Pager $side="right"><MdChevronRight size={52} /></Pager>
        <PageControls>
          <PageInfo>
            <Fit w={89}>Página</Fit><Fit w={32}>22</Fit><Fit w={32}>de</Fit><Fit w={32}>25</Fit>
          </PageInfo>
          <ZoomTools>
            <MdRemove size={54} color="#999" />
            <MdZoomIn size={54} />
            <MdAdd size={54} />
          </ZoomTools>
        </PageControls>
      </Stage>
    </Screen>
  );
}
